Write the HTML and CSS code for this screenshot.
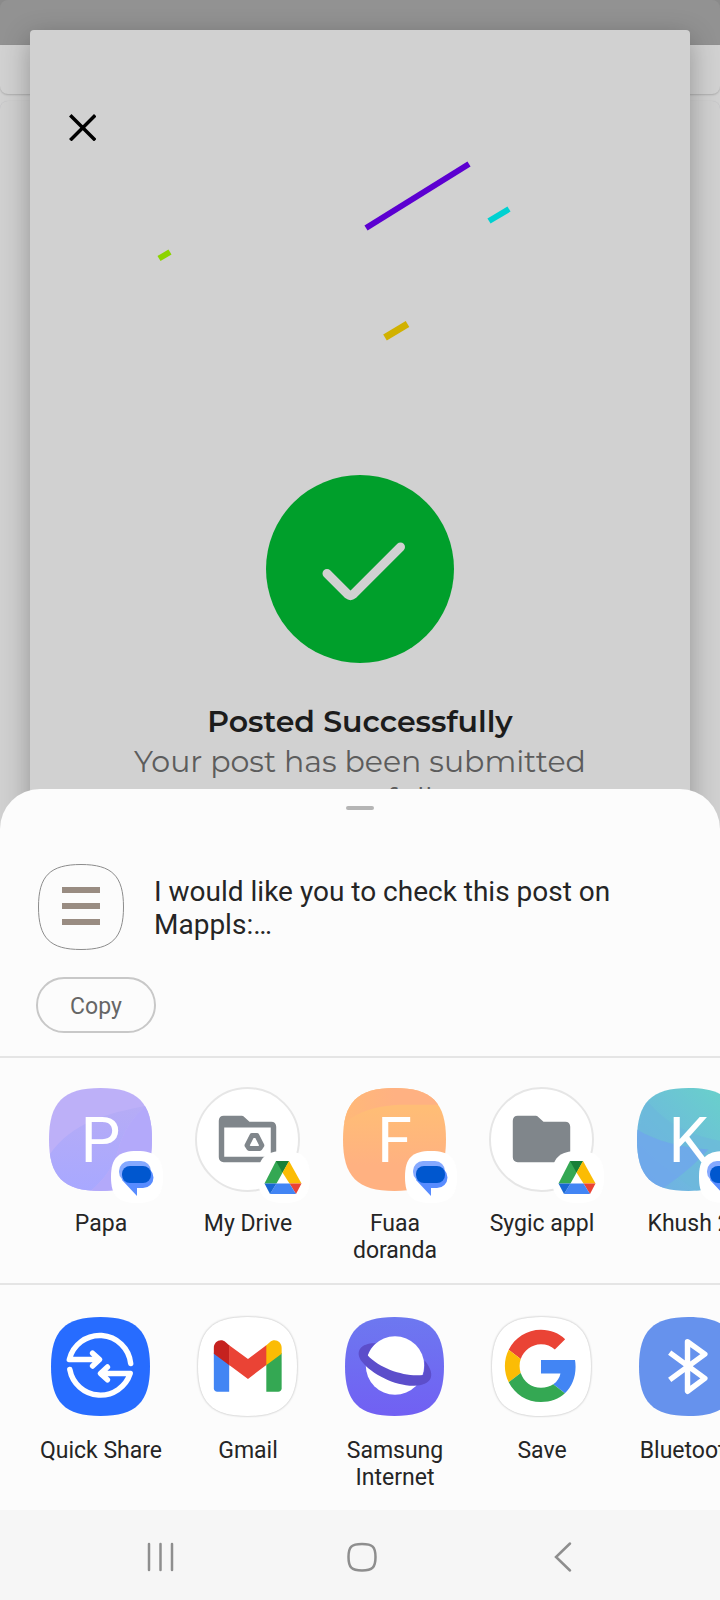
FILE: index.html
```html
<!DOCTYPE html>
<html lang="en">
<head>
<meta charset="utf-8">
<meta name="viewport" content="width=device-width, initial-scale=1">
<title>Share post</title>
<link rel="stylesheet" href="styles.css">
</head>
<body>
<svg class="defs" aria-hidden="true">
  <defs>
    <symbol id="squircle" viewBox="0 0 100 100"><path d="M50 0C86 0 100 14 100 50S86 100 50 100 0 86 0 50 14 0 50 0z"/></symbol>
    <clipPath id="clip"><path d="M52 0C89.500 0 104 14.500 104 52S89.500 104 52 104 0 89.500 0 52 14.500 0 52 0z"/></clipPath>
    <linearGradient id="violet" x1="0" y1="0" x2="0" y2="1"><stop offset="0" stop-color="#b6acf6"/><stop offset="1" stop-color="#a8a8ff"/></linearGradient>
    <linearGradient id="orange" x1="0" y1="0" x2="0" y2="1"><stop offset="0" stop-color="#ffbd76"/><stop offset=".2" stop-color="#ffbd76"/><stop offset=".75" stop-color="#ffb181"/></linearGradient>
    <linearGradient id="orangetop"><stop offset="0" stop-color="#ffb978"/><stop offset=".5" stop-color="#ffb182"/></linearGradient>
    <linearGradient id="teal" x1="0" y1="1" x2="1" y2="0"><stop offset=".1" stop-color="#70b0e4"/><stop offset=".9" stop-color="#69d0cb"/></linearGradient>
    <linearGradient id="planet" x1="0" y1="0" x2="0" y2="1"><stop offset="0" stop-color="#6d78f0"/><stop offset="1" stop-color="#7160f3"/></linearGradient>
    <symbol id="messages" viewBox="0 0 52 52">
      <path fill="#fff" d="M26 0C45 0 52 7 52 26S45 52 26 52 0 45 0 26 7 0 26 0z"/>
      <rect x="8" y="10" width="32" height="21" rx="10" fill="#85a9ff"/>
      <path fill="#588cff" d="M32 16a10.500 10.500 0 0 1 0 21h-6v8L11 29l8-13z"/>
      <rect x="11" y="15" width="29" height="17" rx="8" fill="#0057cf"/>
    </symbol>
    <symbol id="drive" viewBox="0 0 52 52">
      <path fill="#fff" d="M26 0C45 0 52 7 52 26S45 52 26 52 0 45 0 26 7 0 26 0z"/>
      <path fill="#34a853" d="M18 10h13L18.500 32.500H6.500z"/>
      <path fill="#188038" d="M18 10h13l-6.500 11.500z"/>
      <path fill="#fbbc04" d="M31 10l12.500 22.500h-12l-7-11z"/>
      <path fill="#ea4335" d="M31.500 32.500h12L38 43z"/>
      <path fill="#4285f4" d="M18.500 32.500h13L38 43H12z"/>
      <path fill="#1967d2" d="M6.500 32.500h12L12 43z"/>
    </symbol>
  </defs>
</svg>

<div class="screen">
  <main class="stage">
    <div class="backdrop" aria-hidden="true">
      <div class="backdrop-bar"></div>
      <div class="backdrop-tool"></div>
      <div class="backdrop-page"></div>
    </div>
    <section class="dialog">
      <button class="close" aria-label="Close">
        <svg width="28" height="28" viewBox="0 0 28 28"><path d="M3.500 3.500l22.500 22.500M26 3.500L3.500 26" stroke="#000" stroke-width="3.500" stroke-linecap="square"/></svg>
      </button>
      <svg class="confetti" viewBox="0 0 660 324" aria-hidden="true">
        <path d="M336 77L439 13" stroke="#5c00d1" stroke-width="6"/>
        <path d="M459 70l20-12" stroke="#00d1d1" stroke-width="6"/>
        <path d="M129 107.500l11-6.500" stroke="#8cd400" stroke-width="6"/>
        <path d="M355 186.500l22.500-13.500" stroke="#d1b100" stroke-width="7"/>
      </svg>
      <svg class="success" width="188" height="188" viewBox="0 0 188 188" aria-hidden="true">
        <circle cx="94" cy="94" r="94" fill="#009f2b"/>
        <path d="M61 98.500L82 119.500q2.500 2 5 0L134.500 72" fill="none" stroke="#d1d1d1" stroke-width="9" stroke-linecap="round" stroke-linejoin="round"/>
      </svg>
      <h1 class="title">Posted Successfully</h1>
      <p class="message">Your post has been submitted successfully</p>
    </section>
  </main>

  <section class="sheet" aria-label="Share">
    <div class="handle"></div>
    <div class="preview">
      <svg width="86" height="86" viewBox="0 0 86 86" aria-hidden="true">
        <path d="M43 .500C74 .500 85.500 12 85.500 43S74 85.500 43 85.500 .500 74 .500 43 12 .500 43 .500z" fill="none" stroke="#8c8c8c"/>
        <path d="M24 23h38v6H24zM24 39h38v6H24zM24 55h38v6H24z" fill="#998c82"/>
      </svg>
      <p class="preview-text">I would like you to check this post on Mappls:…</p>
    </div>
    <button class="copy">Copy</button>

    <div class="targets contacts">
      <button class="target">
        <span class="icon">
          <svg viewBox="0 0 104 104"><g clip-path="url(#clip)"><path fill="#bdb0f8" d="M0 0h104v104H0z"/><path fill="url(#violet)" d="M0 68C24 34 58 26 98 18c-14 12-23 26-28 44-5 18-14 30-28 42H0z"/><path fill="#b3a9fa" d="M98 18c-14 12-23 26-28 44-5 18-14 30-28 42h62V18z"/></g><text class="initial" x="52" y="75">P</text></svg>
          <svg class="badge"><use href="#messages"/></svg>
        </span>
        <span class="label">Papa</span>
      </button>
      <button class="target">
        <span class="icon">
          <svg viewBox="0 0 104 104"><circle cx="52" cy="52" r="52" fill="#fff" stroke="#e6e6e6" stroke-width="2"/><path fill="#80868b" fill-rule="evenodd" d="M28 28h17c2 0 3 .500 4 1.500l5 4.500h22c3 0 5 2 5 5v31c0 3-2 5-5 5H28c-3 0-5-2-5-5V33c0-3 2-5 5-5zm.500 12v29.500h47V40z"/><path d="M56.500 48h5l5 10-2 3h-11l-2-3z" fill="none" stroke="#80868b" stroke-width="5" stroke-linejoin="round"/></svg>
          <svg class="badge"><use href="#drive"/></svg>
        </span>
        <span class="label">My Drive</span>
      </button>
      <button class="target">
        <span class="icon">
          <svg viewBox="0 0 104 104"><g clip-path="url(#clip)"><path fill="url(#orange)" d="M0 0h104v104H0z"/><path fill="url(#orangetop)" d="M0 0h104v17H57C38 18 24 21 9 30L0 36z"/></g><text class="initial" x="52" y="75">F</text></svg>
          <svg class="badge"><use href="#messages"/></svg>
        </span>
        <span class="label">Fuaa doranda</span>
      </button>
      <button class="target">
        <span class="icon">
          <svg viewBox="0 0 104 104"><circle cx="52" cy="52" r="52" fill="#fff" stroke="#e6e6e6" stroke-width="2"/><path fill="#80868b" d="M28 28h17c2 0 3 .500 4 1.500l5 4.500h22c3 0 5 2 5 5v31c0 3-2 5-5 5H28c-3 0-5-2-5-5V33c0-3 2-5 5-5z"/></svg>
          <svg class="badge"><use href="#drive"/></svg>
        </span>
        <span class="label">Sygic appl</span>
      </button>
      <button class="target">
        <span class="icon">
          <svg viewBox="0 0 104 104"><g clip-path="url(#clip)"><path fill="url(#teal)" d="M0 0h104v104H0z"/><path fill="#6db7dc" opacity=".6" d="M8 10c20 26 50 42 96 46v48H60L0 60z"/><path fill="#6fa6ec" opacity=".8" d="M0 42c20 12 44 18 72 20-14 16-32 30-50 42H0z"/></g><text class="initial" x="52" y="75">K</text></svg>
          <svg class="badge"><use href="#messages"/></svg>
        </span>
        <span class="label">Khush 2</span>
      </button>
    </div>

    <div class="targets apps">
      <button class="target">
        <span class="icon">
          <svg viewBox="0 0 100 100"><use href="#squircle" fill="#276cff"/><g fill="none" stroke="#fff" stroke-width="5.500" stroke-linecap="round" stroke-linejoin="round"><path d="M80.500 47A31.500 31.500 0 0 0 18.500 43H47M42 36.500l7 6.500-7 6.500"/><path d="M19 53a31.500 31.500 0 0 0 61 4H52M57 50.500l-7 6.500 7 6.500"/></g></svg>
        </span>
        <span class="label">Quick Share</span>
      </button>
      <button class="target">
        <span class="icon white">
          <svg viewBox="0 0 100 100"><use href="#squircle" fill="#fff"/><path fill="#4285f4" d="M16 36L31.500 46v29.500H19.500c-2 0-3.500-1.500-3.500-3.500z"/><path fill="#34a853" d="M84.500 36L69 46v29.500h12c2 0 3.500-1.500 3.500-3.500z"/><path fill="#c5221f" d="M16 37v-6c0-6 7-10 12-5.500l4 3.500v20z"/><path fill="#fbbc04" d="M84.500 37v-6c0-6-7-10-12-5.500l-4 3.500v20z"/><path fill="#ea4335" d="M31.500 28.500l19 14L69 28.500V48.500l-18.500 14L31.500 48.500z"/></svg>
        </span>
        <span class="label">Gmail</span>
      </button>
      <button class="target">
        <span class="icon">
          <svg viewBox="0 0 100 100"><use href="#squircle" fill="url(#planet)"/><circle cx="50.500" cy="49" r="29.500" fill="#fff"/><path fill="#5c4ecb" d="M31 26.500C17 26 9 34 17 45c10 13 34 25 53 24.500 17-.500 23-10 10.500-25.500 0 5 0 10-1.500 14.500C62 61 36 53 23 39c1-5 4-9 8-12.500z"/></svg>
        </span>
        <span class="label">Samsung Internet</span>
      </button>
      <button class="target">
        <span class="icon white">
          <svg viewBox="0 0 100 100"><use href="#squircle" fill="#fff"/><g transform="translate(13 13) scale(1.520)"><path fill="#ea4335" d="M24 9.500c3.540 0 6.710 1.220 9.210 3.600l6.850-6.850C35.900 2.380 30.470 0 24 0 14.620 0 6.510 5.380 2.560 13.220l7.980 6.190C12.430 13.720 17.740 9.500 24 9.500z"/><path fill="#4285f4" d="M46.980 24.550c0-1.570-.15-3.090-.38-4.550H24v9.020h12.940c-.58 2.960-2.260 5.480-4.780 7.180l7.730 6c4.510-4.180 7.090-10.360 7.090-17.650z"/><path fill="#fbbc05" d="M10.530 28.590c-.48-1.450-.76-2.990-.76-4.590s.27-3.140.76-4.590l-7.980-6.190C.92 16.460 0 20.120 0 24c0 3.880.92 7.540 2.560 10.780l7.970-6.190z"/><path fill="#34a853" d="M24 48c6.480 0 11.930-2.130 15.890-5.810l-7.730-6c-2.150 1.450-4.920 2.300-8.160 2.300-6.260 0-11.570-4.220-13.470-9.910l-7.980 6.190C6.510 42.620 14.620 48 24 48z"/></g></svg>
        </span>
        <span class="label">Save</span>
      </button>
      <button class="target">
        <span class="icon">
          <svg viewBox="0 0 100 100"><use href="#squircle" fill="#6692ed"/><path d="M31 36L66.500 62 49 75V25L66.500 37.500 31 63.500" fill="none" stroke="#fff" stroke-width="5.500" stroke-linejoin="round"/></svg>
        </span>
        <span class="label">Bluetooth</span>
      </button>
    </div>
  </section>

  <nav class="navbar" aria-label="System">
    <button class="nav-button" aria-label="Recent apps"><svg width="32" height="32" viewBox="0 0 32 32"><path d="M4 3v26M15.500 3v26M27 3v26"/></svg></button>
    <button class="nav-button" aria-label="Home"><svg width="32" height="32" viewBox="0 0 32 32"><path d="M16 3c10.500 0 13.500 2.500 13.500 13S26.500 29.500 16 29.500 2.500 26.500 2.500 16 5.500 3 16 3z"/></svg></button>
    <button class="nav-button" aria-label="Back"><svg width="32" height="32" viewBox="0 0 32 32"><path d="M24 2.500L10 16l14 13.500"/></svg></button>
  </nav>
</div>
</body>
</html>
```

FILE: styles.css
```css
* {
  box-sizing: border-box;
}

body {
  margin: 0;
  background: #f6f6f6;
  color: #252525;
  font-family: Roboto, "Liberation Sans", sans-serif;
}

button {
  margin: 0;
  padding: 0;
  border: 0;
  background: none;
  color: inherit;
  font: inherit;
  cursor: pointer;
}

svg {
  display: block;
}

.defs {
  position: absolute;
  width: 0;
  height: 0;
}

.screen {
  display: flex;
  flex-direction: column;
  min-height: 100vh;
}

/* Dimmed page with the success dialog on top */
.stage {
  display: grid;
  background: #d1d1d1;
  overflow: hidden;
}

.backdrop,
.dialog {
  grid-area: 1 / 1;
}

.backdrop {
  display: flex;
  flex-direction: column;
  background: linear-gradient(#8a8a8a 45px, #d1d1d1 45px);
}

.backdrop-bar {
  height: 45px;
  background: #929292;
  border-radius: 8px 8px 0 0;
}

.backdrop-tool {
  height: 49px;
  margin-bottom: 7px;
  border-radius: 0 0 8px 8px;
  box-shadow: 0 1px 2px rgba(0, 0, 0, 0.18);
}

.backdrop-page {
  flex: 1;
  border-radius: 8px 8px 0 0;
  background: #d0d0d0;
  box-shadow: 0 0 1px rgba(0, 0, 60, 0.15);
}

.dialog {
  display: flex;
  flex-direction: column;
  align-items: center;
  margin: 30px 30px 0;
  padding: 73px 0 34px;
  border-radius: 4px;
  background: #d1d1d1;
  box-shadow: 0 8px 28px rgba(0, 0, 0, 0.3);
}

.close {
  display: grid;
  place-items: center;
  align-self: flex-start;
  width: 48px;
  height: 48px;
  margin-left: 28px;
}

.confetti {
  width: 100%;
}

.title,
.message {
  margin: 0;
  font-family: Montserrat, Inter, sans-serif;
  font-size: 30px;
  line-height: 37px;
  text-align: center;
}

.title {
  margin: 40px 0 3px;
  color: #1c1c1c;
  font-weight: 600;
}

.message {
  max-width: 500px;
  color: #5c5c5c;
  font-weight: 400;
}

/* Share sheet */
.sheet {
  position: relative;
  flex: 1;
  margin-top: -62px;
  padding-top: 17px;
  border-radius: 40px 40px 0 0;
  background: #fcfcfc;
}

.handle {
  width: 28px;
  height: 4px;
  margin: 0 auto;
  border-radius: 2px;
  background: #b5b5b5;
}

.preview {
  display: flex;
  align-items: center;
  gap: 30px;
  padding: 54px 38px 0;
}

.preview-text {
  flex: 1;
  max-width: 500px;
  margin: 0;
  padding-top: 2px;
  font-size: 28px;
  line-height: 33px;
}

.copy {
  display: block;
  width: 120px;
  height: 56px;
  margin: 27px 36px 23px;
  padding-top: 2px;
  border: 2px solid #c8c8c8;
  border-radius: 28px;
  color: #666;
  font-size: 23px;
}

.targets {
  display: flex;
  align-items: flex-start;
  padding: 30px 0 19px 27px;
  border-top: 2px solid #e5e5e5;
  overflow-x: auto;
  scrollbar-width: none;
}

.target {
  display: flex;
  flex: none;
  flex-direction: column;
  align-items: center;
  gap: 19px;
  width: 147px;
}

.icon {
  position: relative;
  width: 103px;
  height: 103px;
}

.icon svg {
  overflow: visible;
}

.apps {
  padding-top: 32px;
}

.apps .target {
  gap: 21px;
}

.apps .icon {
  width: 99px;
  height: 99px;
}

.white {
  filter: drop-shadow(0 0 1px rgba(0, 0, 0, 0.3));
}

.badge {
  position: absolute;
  top: 63px;
  left: 62px;
  width: 52px;
  height: 52px;
}

.initial {
  fill: #fff;
  font-size: 64px;
  text-anchor: middle;
}

.label {
  min-height: 54px;
  padding: 0 8px 0 9px;
  font-size: 23px;
  line-height: 27px;
  text-align: center;
}

.navbar {
  display: flex;
  justify-content: center;
  height: 90px;
  padding: 4px 0 0 3px;
  background: #f6f6f6;
}

.nav-button {
  display: grid;
  place-items: center;
  width: 28%;
}

.nav-button path {
  fill: none;
  stroke: #8e8e8e;
  stroke-width: 2.500px;
  stroke-linecap: round;
}
```
